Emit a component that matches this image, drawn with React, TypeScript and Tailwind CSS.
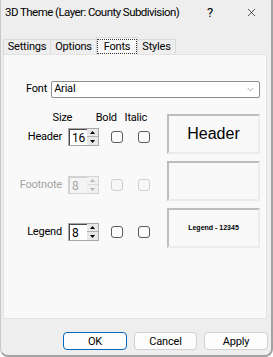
import { ChevronDown, X } from 'lucide-react'

const font = { fontFamily: 'Roboto, "Noto Sans", sans-serif' }

function Spin({ value, disabled }: { value: string; disabled?: boolean }) {
  return (
    <div className={`flex h-[18px] w-[31px] border ${disabled ? 'border-[#d4d4d4]' : 'border-[#a8a8a8]'}`}>
      <div
        className={`flex w-[19px] items-center pl-[2px] text-[12px] leading-none ${
          disabled ? 'bg-[#f4f4f4] text-[#a8a8a8] border-t border-l border-[#d0d0d0]' : 'bg-white text-black border-t border-l border-[#4a4a4a]'
        }`}
      >
        {value}
      </div>
      <div className="flex w-[11px] flex-col">
        <div className={`flex h-1/2 items-center justify-center border-b ${disabled ? 'bg-[#f0f0f0] border-[#dcdcdc] text-[#b5b5b5]' : 'bg-[#e8e8e8] border-[#b0b0b0] text-black'}`}>
          <svg width="5" height="3" viewBox="0 0 5 3"><path d="M0 3 L2.5 0 L5 3 Z" fill="currentColor" /></svg>
        </div>
        <div className={`flex h-1/2 items-center justify-center ${disabled ? 'bg-[#f0f0f0] text-[#b5b5b5]' : 'bg-[#e8e8e8] text-black'}`}>
          <svg width="5" height="3" viewBox="0 0 5 3"><path d="M0 0 L5 0 L2.5 3 Z" fill="currentColor" /></svg>
        </div>
      </div>
    </div>
  )
}

function Check({ disabled }: { disabled?: boolean }) {
  return (
    <div
      className={`h-[12px] w-[12px] rounded-[3px] border ${
        disabled ? 'border-[#cfcfcf] bg-[#f7f7f7]' : 'border-[#5c5c5c] bg-[#fbfbfb]'
      }`}
    />
  )
}

function Row({ label, value, disabled }: { label: string; value: string; disabled?: boolean }) {
  return (
    <div className="flex h-[18px] items-center">
      <div className={`w-[58px] text-right ${disabled ? 'text-[#a3a3a3]' : 'text-black'}`}>{label}</div>
      <div className="ml-[6px]">
        <Spin value={value} disabled={disabled} />
      </div>
      <div className="ml-[12px]">
        <Check disabled={disabled} />
      </div>
      <div className="ml-[15px]">
        <Check disabled={disabled} />
      </div>
    </div>
  )
}

function Preview({ children }: { children?: React.ReactNode }) {
  return (
    <div className="flex h-[40px] w-[93px] items-center justify-center border-2 border-t-[#bdbdbd] border-l-[#bdbdbd] border-r-[#ececec] border-b-[#ececec] bg-[#f9f9f9]">
      {children}
    </div>
  )
}

export default function App() {
  return (
    <div style={font} className="relative h-[357px] w-[273px] overflow-hidden whitespace-nowrap rounded-b-[8px] border-r-2 border-b-2 border-l border-[#a3a3a3] border-l-[#c8c8c8] bg-[#eeeeee] text-[11px] tracking-[-0.2px] text-black">
      {/* title bar */}
      <div className="flex h-[25px] items-center pl-[4px] text-[11.5px]">
        <span className="tracking-[-0.55px]">3D Theme (Layer: County Subdivision)</span>
        <span className="ml-auto mr-[32px] text-[13px]">?</span>
        <X size={13} strokeWidth={1.2} className="mr-[13px]" />
      </div>

      {/* tabs */}
      <div className="mt-[12px] flex h-[17px] items-end pl-[2px]">
        <div className="flex h-[15px] w-[47px] items-center justify-center border-t border-l border-[#dadada] bg-[#eeeeee]">Settings</div>
        <div className="flex h-[15px] w-[46px] items-center justify-center border-t border-l border-[#dadada] bg-[#eeeeee]">Options</div>
        <div className="relative z-10 -mb-px flex h-[18px] w-[42px] items-center justify-center border-t border-l border-r border-[#dadada] bg-[#f9f9f9]">
          <span className="border border-dotted border-[#333] px-[6px] leading-[13px]">Fonts</span>
        </div>
        <div className="flex h-[15px] w-[38px] items-center justify-center border-t border-r border-[#dadada] bg-[#eeeeee]">Styles</div>
      </div>

      {/* panel */}
      <div className="ml-[2px] h-[265px] w-[264px] border border-[#e3e3e3] bg-[#f9f9f9] pt-[26px]">
        <div className="flex h-[17px] items-center">
          <span className="pl-[22px]">Font</span>
          <div className="ml-[4px] mr-[6px] flex h-[17px] flex-1 items-center rounded-[2px] border border-[#8d8d8d] bg-white pl-[2px] pr-[3px]">
            <span>Arial</span>
            <ChevronDown size={11} strokeWidth={1} className="ml-auto text-[#555]" />
          </div>
        </div>

        <div className="flex">
          <div className="mt-[12px] w-[146px] shrink-0">
            <div className="flex h-[16px] items-center">
              <span className="ml-[43px] w-[36px] text-center">Size</span>
              <span className="ml-[13px] w-[36px] text-center">Bold</span>
              <span className="w-[33px] text-center">Italic</span>
            </div>
            <div className="mt-[2px]">
              <Row label="Header" value="16" />
            </div>
            <div className="mt-[30px]">
              <Row label="Footnote" value="8" disabled />
            </div>
            <div className="mt-[29px]">
              <Row label="Legend" value="8" />
            </div>
          </div>

          <div className="ml-[17px] mt-[16px] flex flex-col gap-[7px]">
            <Preview>
              <span style={{ fontFamily: '"Liberation Sans", Arial, sans-serif' }} className="text-[16px] tracking-normal">Header</span>
            </Preview>
            <Preview />
            <Preview>
              <span style={{ fontFamily: '"Liberation Sans", Arial, sans-serif' }} className="text-[7px] font-bold tracking-normal">Legend - 12345</span>
            </Preview>
          </div>
        </div>
      </div>

      {/* buttons */}
      <div className="mt-[13px] flex gap-[7px] pl-[62px]">
        <button className="h-[18px] w-[64px] rounded-[4px] border border-[#0067c0] bg-[#fdfdfd] leading-none">OK</button>
        <button className="h-[18px] w-[63px] rounded-[4px] border border-[#d0d0d0] bg-[#fdfdfd] leading-none">Cancel</button>
        <button className="h-[18px] w-[64px] rounded-[4px] border border-[#d0d0d0] bg-[#fdfdfd] leading-none">Apply</button>
      </div>
    </div>
  )
}
